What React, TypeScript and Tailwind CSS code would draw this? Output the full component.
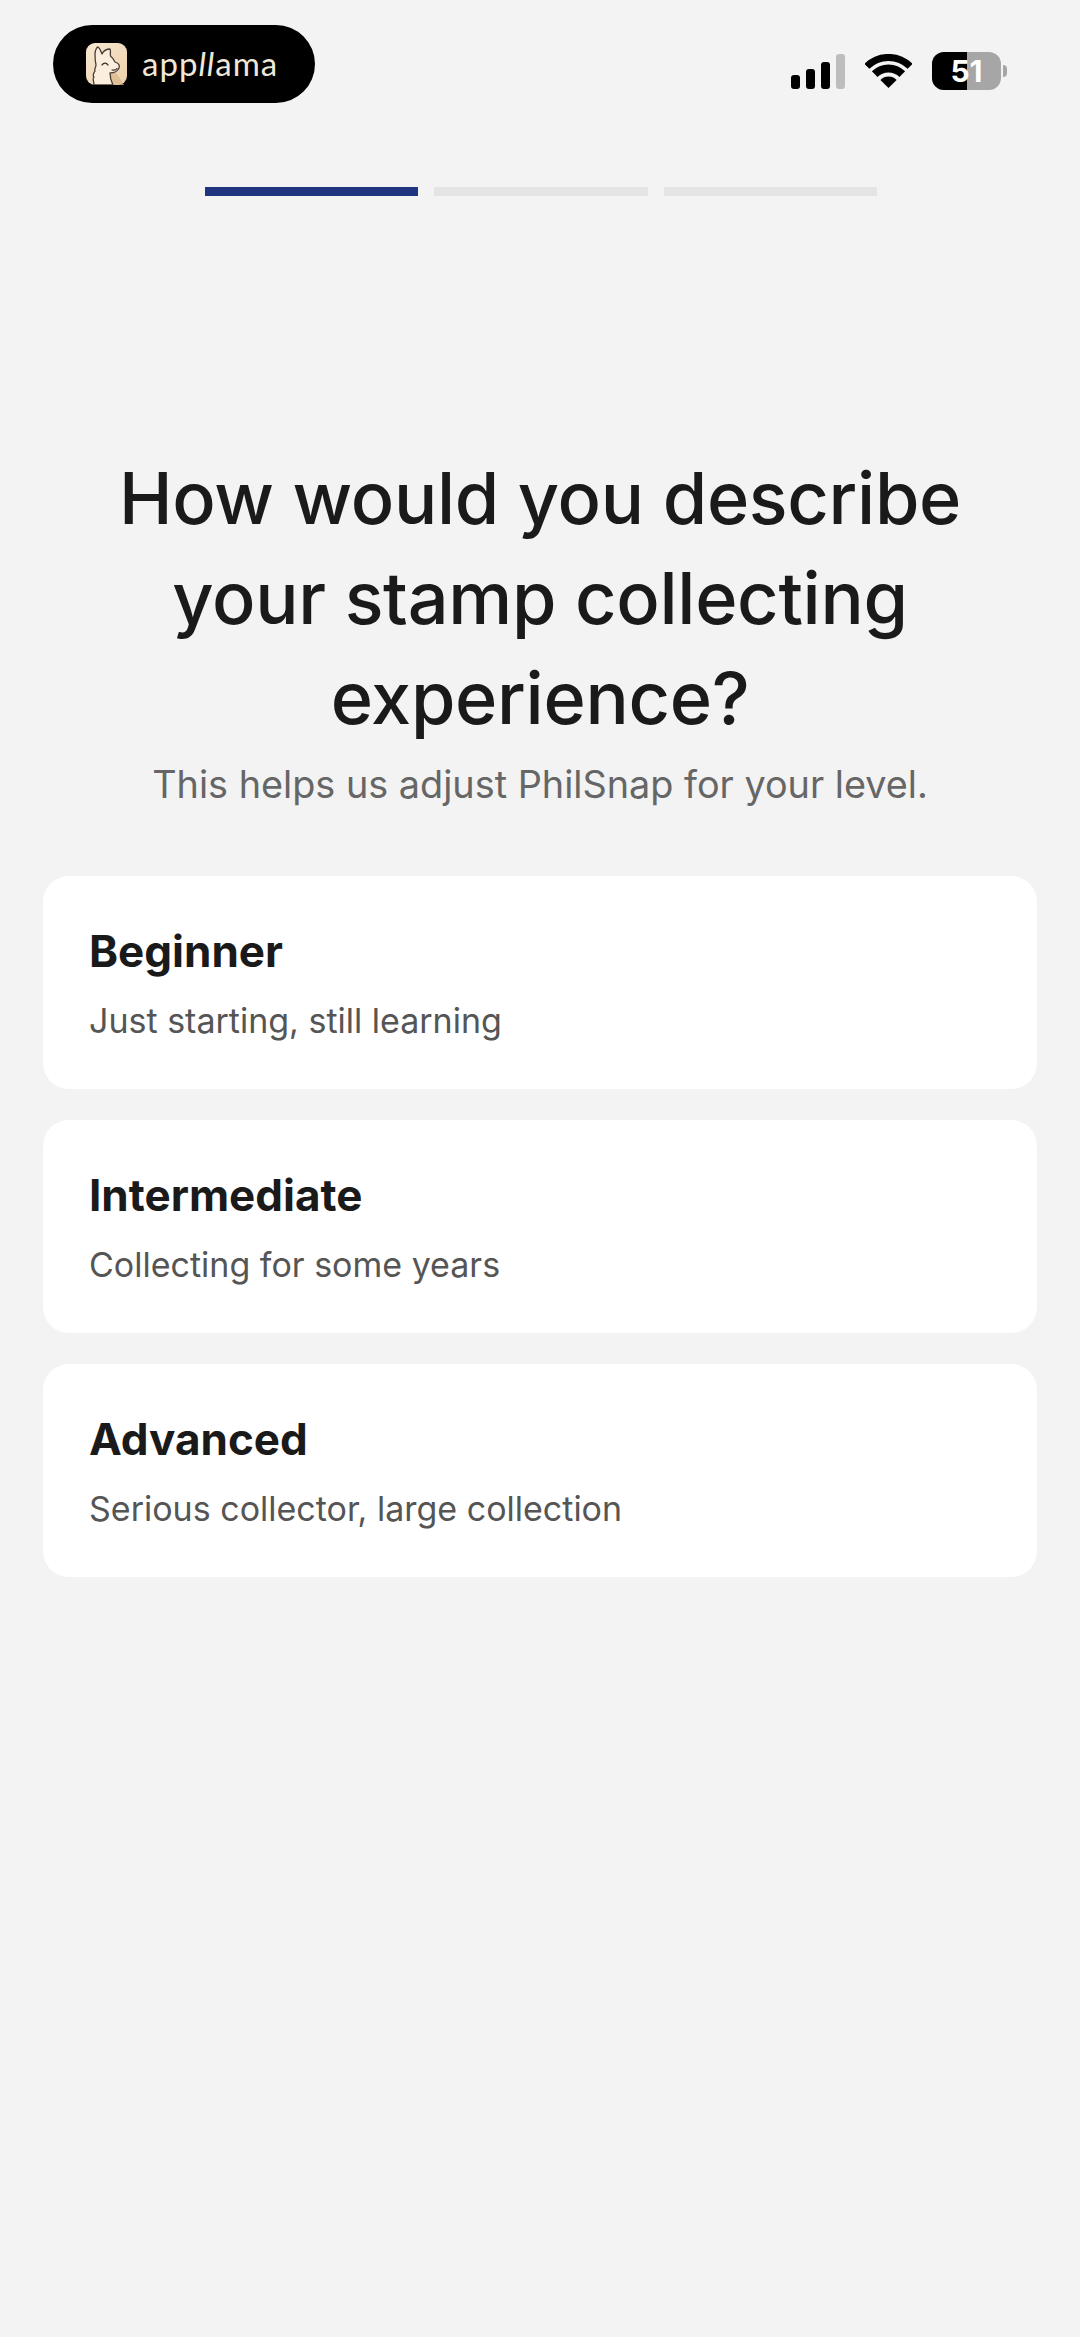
import React from "react";

const levels = [
  { title: "Beginner", sub: "Just starting, still learning" },
  { title: "Intermediate", sub: "Collecting for some years" },
  { title: "Advanced", sub: "Serious collector, large collection" },
];

const LlamaIcon = () => (
  <svg width="41" height="42" viewBox="0 0 41 42" className="block">
    <defs>
      <linearGradient id="tile" x1="0" y1="0" x2="1" y2="1">
        <stop offset="0" stopColor="#f8e8d3" />
        <stop offset="1" stopColor="#eccfa8" />
      </linearGradient>
    </defs>
    <rect width="41" height="42" rx="9" fill="url(#tile)" />
    <path d="M24 30C24 34 25 38 27 42H38C35 36 31 31 28 28z" fill="#d9b78d" opacity="0.7" />
    <path
      d="M8 42C8 38 6 36 8 34C6 32 8 30 9 28C8 26 10 24 10 22C9 18 9 14 9 11C9 7 11 4 12 4C14 5 15 9 16 11C17 9 20 6 24 6C25 8 24 11 24.500 13C27 15 28 17 29 19C32 20 34 22 33 25C32 28 28 30 24 30C24 34 25 38 27 42z"
      fill="#fbeedd"
      stroke="#4a3f35"
      strokeWidth="1.300"
      strokeLinejoin="round"
    />
    <path d="M16 22C17.500 19.500 20.500 19.500 22 22" fill="none" stroke="#3a3029" strokeWidth="1.400" strokeLinecap="round" />
    <path d="M26 27C28 27.500 30 27 31 25.500" fill="none" stroke="#3a3029" strokeWidth="1.200" strokeLinecap="round" />
  </svg>
);

const Wifi = () => (
  <svg width="47" height="34" viewBox="0 0 47 34" className="block">
    <path d="M23.500 34L15.400 25.900A11.500 11.500 0 0 1 31.600 25.900z" fill="#000" />
    <path d="M9.700 20.200A19.500 19.500 0 0 1 37.300 20.200" fill="none" stroke="#000" strokeWidth="8" />
    <path d="M1.900 12.400A30.500 30.500 0 0 1 45.100 12.400" fill="none" stroke="#000" strokeWidth="7" />
  </svg>
);

const App = () => {
  return (
    <div className="w-[1080px] h-[2337px] bg-[#f3f3f3] font-['Inter',sans-serif] overflow-hidden">
      {/* status bar */}
      <div className="h-[187px] pl-[53px] pr-[73px] pt-[25px] flex justify-between items-start">
        <div className="w-[262px] h-[78px] rounded-full bg-black flex items-center pl-[33px] gap-[15px]">
          <LlamaIcon />
          <span className="font-['Lato',sans-serif] font-normal text-[33px] leading-none text-[#efe7da] tracking-[1px] pb-[2px]">
            app<i>ll</i>ama
          </span>
        </div>
        <div className="flex items-center gap-[20px] pt-[27px]">
          <div className="flex items-end gap-[6px] h-[35px]">
            <div className="w-[9px] h-[14px] rounded-[3px] bg-black" />
            <div className="w-[9px] h-[20px] rounded-[3px] bg-black" />
            <div className="w-[9px] h-[27px] rounded-[3px] bg-black" />
            <div className="w-[9px] h-[35px] rounded-[3px] bg-[#bdbdbd]" />
          </div>
          <Wifi />
          <div className="flex items-center gap-[2px]">
            <div className="relative w-[69px] h-[38px] rounded-[12px] bg-[#a6a6a6] overflow-hidden flex items-center justify-center">
              <div className="absolute left-0 top-0 bottom-0 w-[35px] bg-black" />
              <span className="relative text-[30px] leading-none font-bold text-white">51</span>
            </div>
            <div className="w-[4px] h-[12px] rounded-r-full bg-[#a6a6a6]" />
          </div>
        </div>
      </div>

      {/* progress */}
      <div className="flex pl-[205px] gap-[16px]">
        <div className="w-[213px] h-[9px] bg-[#1f3580]" />
        <div className="w-[214px] h-[9px] bg-[#e4e4e4]" />
        <div className="w-[213px] h-[9px] bg-[#e4e4e4]" />
      </div>

      {/* heading */}
      <div className="pt-[252px] text-center">
        <h1 className="text-[72px] leading-[100px] font-[540] text-[#1a1a1a] tracking-[-0.3px]">
          How would you describe
          <br />
          your stamp collecting
          <br />
          experience?
        </h1>
        <p className="mt-[11px] text-[37.800px] leading-[50px] text-[#666666]">
          This helps us adjust PhilSnap for your level.
        </p>
      </div>

      {/* options */}
      <div className="mt-[67px] mx-[43px] flex flex-col gap-[31px]">
        {levels.map((l) => (
          <div key={l.title} className="h-[213px] rounded-[26px] bg-white pl-[46px] pt-[47px]">
            <div className="text-[44px] leading-[56px] font-[650] text-[#1a1a1a]">{l.title}</div>
            <div className="mt-[21px] text-[34px] leading-[42px] text-[#555555]">{l.sub}</div>
          </div>
        ))}
      </div>
    </div>
  );
};

export default App;
